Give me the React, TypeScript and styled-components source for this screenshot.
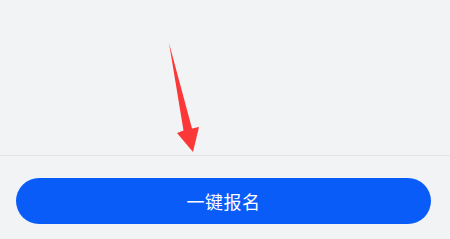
import * as React from 'react';
import styled, { createGlobalStyle } from 'styled-components';

const GlobalStyle = createGlobalStyle`
  html, body {
    margin: 0;
    padding: 0;
    background: #f2f3f5;
  }
  body {
    font-family: "Noto Sans CJK SC", "Noto Sans", sans-serif;
  }
`;

const Page = styled.div`
  position: relative;
  width: 450px;
  height: 239px;
  display: flex;
  flex-direction: column;
  background: #f2f3f5;
  overflow: hidden;
`;

const Content = styled.div`
  height: 155px;
  border-bottom: 1px solid #e4e5e9;
`;

const Footer = styled.div`
  flex: 1;
  padding: 22px 19px 0 16px;
`;

const SignupButton = styled.button`
  display: flex;
  align-items: center;
  justify-content: center;
  width: 100%;
  height: 46px;
  border: none;
  border-radius: 23px;
  background: #0a5cf9;
  color: #ffffff;
  font-family: "Noto Sans CJK SC", "Noto Sans", sans-serif;
  font-size: 18px;
  font-weight: 400;
  letter-spacing: 0.5px;
  padding: 0;
`;

const Annotation = styled.svg`
  position: absolute;
  left: 0;
  top: 0;
  pointer-events: none;
`;

export default function App() {
  return (
    <>
      <GlobalStyle />
      <Page>
        <Content />
        <Footer>
          <SignupButton>一键报名</SignupButton>
        </Footer>
        <Annotation width="450" height="239" viewBox="0 0 450 239">
          <path
            d="M169 43 L192 128.5 L199 127 L193 152 L177 133 L183.5 130.5 Z"
            fill="#fc3737"
          />
        </Annotation>
      </Page>
    </>
  );
}
